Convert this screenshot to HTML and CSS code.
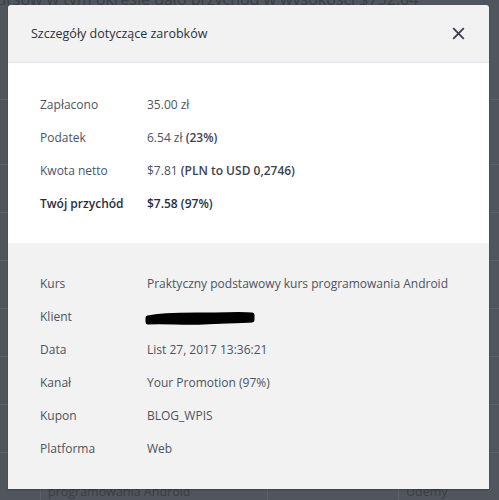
FILE: index.html
```html
<!DOCTYPE html>
<html lang="pl">
<head>
<meta charset="utf-8">
<title>Szczegóły dotyczące zarobków</title>
<link rel="stylesheet" href="styles.css">
</head>
<body>
<div class="page">
  <p class="page-intro">kursów w tym okresie dało przychód w wysokości $752.04</p>
  <div class="bg-table">
    <div class="bg-row r1"><span class="bg-c1"></span><span class="bg-c2"></span><span class="bg-c3"></span></div>
    <div class="bg-row"><span class="bg-c1"></span><span class="bg-c2"></span><span class="bg-c3"></span></div>
    <div class="bg-row"><span class="bg-c1"></span><span class="bg-c2"></span><span class="bg-c3"></span></div>
    <div class="bg-row"><span class="bg-c1"></span><span class="bg-c2"></span><span class="bg-c3"></span></div>
    <div class="bg-row"><span class="bg-c1"></span><span class="bg-c2"></span><span class="bg-c3"></span></div>
    <div class="bg-row"><span class="bg-c1"></span><span class="bg-c2"></span><span class="bg-c3"></span></div>
    <div class="bg-row"><span class="bg-c1"></span><span class="bg-c2"></span><span class="bg-c3"></span></div>
    <div class="bg-row last"><span class="bg-c1">programowania Android</span><span class="bg-c2"></span><span class="bg-c3">Udemy</span></div>
  </div>
</div>

<div class="modal">
  <div class="modal-header">
    <h2 class="modal-title">Szczegóły dotyczące zarobków</h2>
    <button class="close" aria-label="Zamknij">
      <svg width="13" height="13" viewBox="0 0 13 13"><path d="M1.2 1.2 L11.8 11.8 M11.8 1.2 L1.2 11.8" stroke="#3c4350" stroke-width="1.9" fill="none"/></svg>
    </button>
  </div>
  <div class="section section-white">
    <div class="row"><span class="label">Zapłacono</span><span class="value">35.00 zł</span></div>
    <div class="row"><span class="label">Podatek</span><span class="value">6.54 zł <b>(23%)</b></span></div>
    <div class="row"><span class="label">Kwota netto</span><span class="value">$7.81 <b>(PLN to USD 0,2746)</b></span></div>
    <div class="row strong"><span class="label">Twój przychód</span><span class="value">$7.58 (97%)</span></div>
  </div>
  <div class="section section-grey">
    <div class="row"><span class="label">Kurs</span><span class="value">Praktyczny podstawowy kurs programowania Android</span></div>
    <div class="row"><span class="label">Klient</span><span class="value"><svg class="redact" width="114" height="18" viewBox="0 0 114 18"><path d="M4 9 C 20 5, 50 6, 70 6 C 85 5.5, 100 5, 108 6 L 108 11 C 95 12, 80 12, 60 13 C 40 14, 20 12, 4 13 Z" fill="#000" stroke="#000" stroke-width="5" stroke-linejoin="round"/></svg></span></div>
    <div class="row"><span class="label">Data</span><span class="value">List 27, 2017 13:36:21</span></div>
    <div class="row"><span class="label">Kanał</span><span class="value">Your Promotion (97%)</span></div>
    <div class="row"><span class="label">Kupon</span><span class="value">BLOG_WPIS</span></div>
    <div class="row"><span class="label">Platforma</span><span class="value">Web</span></div>
  </div>
</div>
</body>
</html>
```

FILE: styles.css
```css
html, body {
  margin: 0;
  padding: 0;
}
body {
  width: 499px;
  height: 500px;
  overflow: hidden;
  background: #51555d;
  font-family: "Open Sans", "DejaVu Sans", sans-serif;
  position: relative;
}
.page {
  color: #3b3f46;
}
.page-intro {
  margin: -11px 0 0 -12px;
  font-size: 16px;
  line-height: 20px;
  white-space: nowrap;
}
.bg-table {
  margin-top: 90px;
}
.bg-row {
  display: flex;
  height: 47px;
  border-top: 1px solid #5c6068;
  font-size: 12.5px;
}
.bg-row.r1 {
  height: 64px;
}
.bg-row.last {
  align-items: flex-end;
}
.bg-row span {
  box-sizing: border-box;
  height: 100%;
  border-left: 1px solid #5c6068;
  white-space: nowrap;
}
.bg-c1 {
  width: 227px;
  margin-left: 40px;
  padding-left: 7px;
}
.bg-c2 {
  width: 131px;
}
.bg-c3 {
  padding-left: 7px;
  flex: 1;
}
.bg-row.last span {
  height: 20px;
  line-height: 24px;
}

.modal {
  position: absolute;
  left: 8px;
  top: 5px;
  width: 481px;
  border-radius: 3px 3px 0 0;
  overflow: hidden;
  box-shadow: 0 1px 2px rgba(0,0,0,0.25);
}
.modal-header {
  height: 57px;
  background: #f2f2f2;
  border-bottom: 1px solid #e4e8ec;
  display: flex;
  align-items: center;
  justify-content: space-between;
  padding: 0 24px 0 23px;
}
.modal-title {
  margin: 0;
  font-size: 12.5px;
  font-weight: 400;
  color: #29303b;
}
.close {
  border: 0;
  background: none;
  padding: 0;
  width: 13px;
  height: 13px;
  display: flex;
}
.section {
  padding: 24px 32px;
}
.section-white {
  background: #ffffff;
  padding-top: 25px;
  padding-bottom: 23px;
}
.section-grey {
  background: #f2f2f2;
}
.row {
  display: flex;
  align-items: center;
  height: 33px;
  font-size: 12px;
  color: #4c535f;
  white-space: nowrap;
}
.label {
  width: 107px;
  flex: none;
}
.value b {
  font-weight: 600;
  color: #3c4350;
}
.row.strong {
  font-weight: 600;
  color: #29303b;
}
.redact {
  display: block;
  margin-left: -3px;
  margin-top: 3px;
}
```
